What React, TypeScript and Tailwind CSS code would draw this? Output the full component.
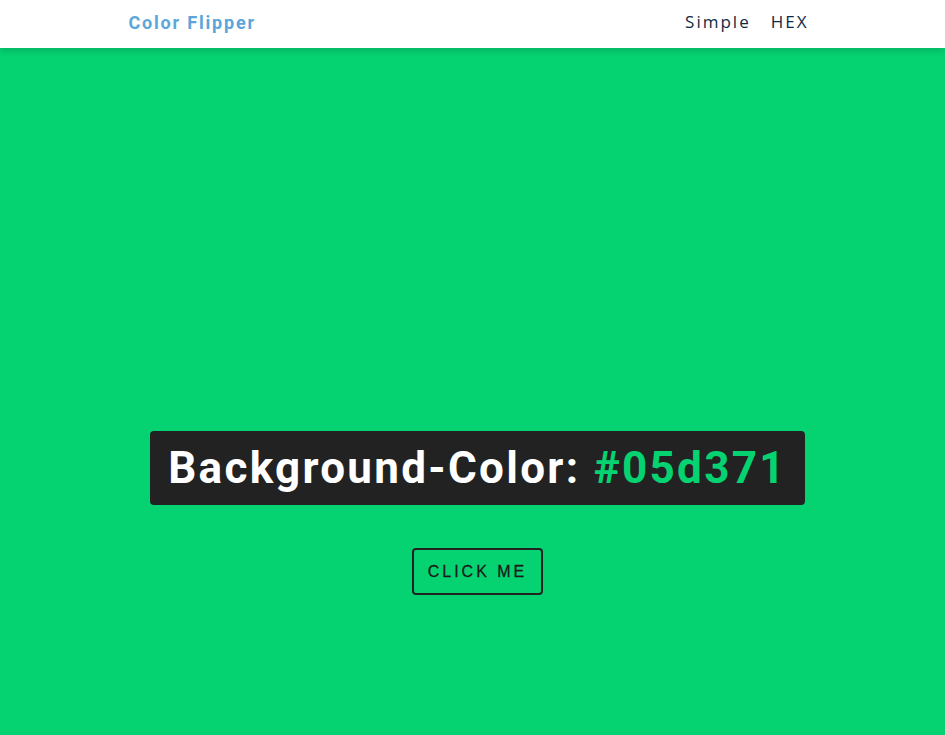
export default function App() {
  const hex = "#05d371";
  return (
    <div className="min-h-screen bg-[#05d371] font-['Roboto',sans-serif]">
      <nav className="flex h-12 items-center bg-white shadow-[0_4px_6px_rgba(0,0,0,0.12)]">
        <div className="mx-auto flex w-[680px] -translate-x-1 -translate-y-0.5 items-center justify-between">
          <h4 className="font-['Roboto',sans-serif] text-[18px] font-bold tracking-[1.8px] text-[#5aa6dc]">
            Color Flipper
          </h4>
          <ul className="flex gap-[20px] font-['Open_Sans',sans-serif] text-[17px] tracking-[2px] text-[#102a42]">
            <li>Simple</li>
            <li>HEX</li>
          </ul>
        </div>
      </nav>

      <main className="flex flex-col items-center pl-[10px] pt-[383px]">
        <h2 className="rounded bg-[#222222] px-[18px] py-[10px] text-[44px] font-bold leading-[54px] tracking-[2.3px] text-white">
          Background-Color: <span style={{ color: hex }}>{hex}</span>
        </h2>
        <button className="mt-[43px] rounded border-2 border-[#222222] px-[14px] py-[11px] font-['Liberation_Sans',sans-serif] text-[16px] font-medium uppercase leading-[21px] tracking-[3px] text-[#1a1a1a] [-webkit-text-stroke:0.3px_#1a1a1a]">
          Click me
        </button>
      </main>
    </div>
  );
}
